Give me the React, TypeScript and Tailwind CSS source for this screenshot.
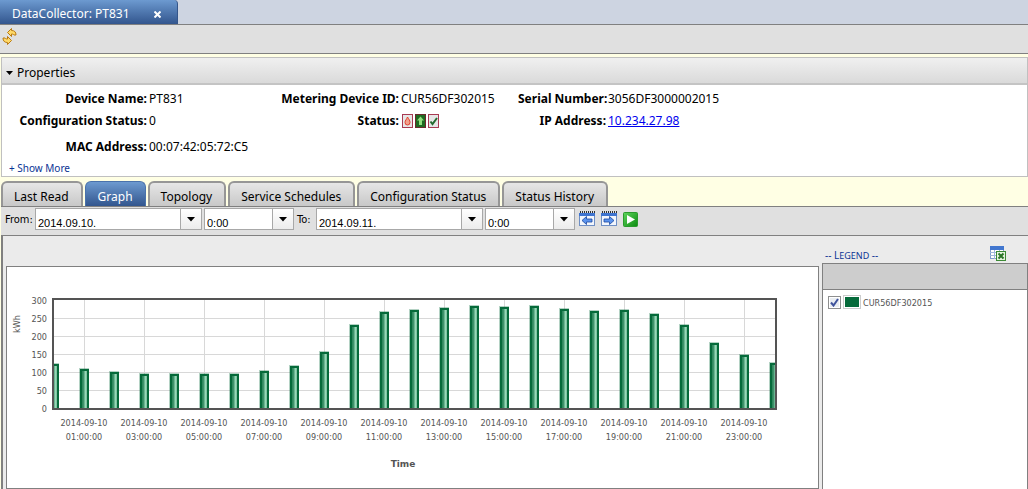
import { useState, type ReactNode } from 'react';

const tabs = ['Last Read', 'Graph', 'Topology', 'Service Schedules', 'Configuration Status', 'Status History'];

const readings = [
  124, 111, 101, 96, 95, 95, 96, 103, 118, 157, 231, 268, 275, 278, 285, 283, 285, 276, 272, 274, 263, 233, 181, 150, 126,
];

function Caret() {
  return (
    <svg width="8" height="5" viewBox="0 0 8 5" aria-hidden="true">
      <path d="M0 0h8L4 4.5z" fill="#000" />
    </svg>
  );
}

function RefreshIcon() {
  return (
    <svg width="16" height="18" viewBox="0 0 16 18" aria-hidden="true">
      <g fill="#ffd968" stroke="#b97a13" strokeWidth="1">
        <path d="M5.500 4.500 9.500.500v2c3 0 4.500 1.500 4.500 4.500h-2c-.500-.500-1-1-2.500-1v2.500z" />
        <path d="M9.500 12.500 5.500 16.500v-2c-3 0-4.500-1.500-4.500-4.500h2c.500.500 1 1 2.500 1V8.500z" />
      </g>
    </svg>
  );
}

function StatusIcons() {
  return (
    <span className="flex gap-0.5 pl-px">
      <svg width="11" height="14" viewBox="0 0 11 14" role="img" aria-label="Alarm">
        <rect x=".5" y=".5" width="10" height="13" fill="#e6e6e6" stroke="#a83a52" />
        <path d="M5.500 3C7 5.500 8 6.500 8 8.500a2.500 2.500 0 0 1-5 0C3 6.500 4.500 5.500 5.500 3z" fill="#f3a08c" stroke="#e0402c" />
      </svg>
      <svg width="11" height="14" viewBox="0 0 11 14" role="img" aria-label="Up">
        <rect x=".5" y=".5" width="10" height="13" fill="#1f6b22" stroke="#6b2a2c" />
        <path d="M5.500 2.500 9 6.500H7V11H4V6.500H2z" fill="#8fe07c" />
      </svg>
      <svg width="11" height="14" viewBox="0 0 11 14" role="img" aria-label="OK">
        <rect x=".5" y=".5" width="10" height="13" fill="#e6e6e6" stroke="#a83a52" />
        <path d="M2.500 7.500 4.500 10 9 4" fill="none" stroke="#23692f" strokeWidth="2" />
      </svg>
    </span>
  );
}

function CalendarIcon({ back = false }: { back?: boolean }) {
  return (
    <svg width="16" height="16" viewBox="0 0 16 16" aria-hidden="true">
      <rect x=".5" y="2.500" width="15" height="12" fill="#f2f6fd" stroke="#6f8fc4" />
      <path d="M0 2h16v3H0z" fill="#3f74cf" />
      <path d="M1 1h15" stroke="#333" strokeWidth="2" strokeDasharray="1 1" />
      <path
        d={back ? 'M3 9.500 7.500 5.500v2.500H13v3H7.500v2.500z' : 'M13 9.500 8.500 5.500v2.500H3v3h5.500v2.500z'}
        fill="#5b93ee"
        stroke="#1c479c"
        strokeWidth=".8"
      />
    </svg>
  );
}

function RunIcon() {
  return (
    <svg width="15" height="15" viewBox="0 0 15 15" aria-hidden="true">
      <defs>
        <linearGradient id="run" x1="0" y1="0" x2="1" y2="1">
          <stop offset="0" stopColor="#5fd45c" />
          <stop offset="1" stopColor="#0b8a10" />
        </linearGradient>
      </defs>
      <rect x=".5" y=".5" width="14" height="14" rx="1" fill="url(#run)" stroke="#2a9a2d" />
      <path d="M4 3 12 7.500 4 12z" fill="#fff" />
    </svg>
  );
}

function ExportIcon() {
  return (
    <svg width="17" height="16" viewBox="0 0 17 16" aria-hidden="true">
      <rect x=".5" y=".5" width="13" height="12" fill="#fff" stroke="#7f9ccc" />
      <path d="M0 0h14v4H0z" fill="#4277cf" />
      <path d="M0 6.500h14M0 9.500h14M4.500 4v9M9.500 4v9" stroke="#9fb6dc" />
      <rect x="6.500" y="5.500" width="9" height="9" fill="#e5f3df" stroke="#3c8a35" />
      <path d="M8.500 7.500l5 5M13.500 7.500l-5 5" stroke="#2a7427" strokeWidth="2" />
    </svg>
  );
}

function Field({ label, children }: { label: string; children?: ReactNode }) {
  return (
    <>
      <dt className="text-right font-bold whitespace-nowrap">{label}</dt>
      <dd className="flex items-center">{children}</dd>
    </>
  );
}

function DateField({ label, value }: { label: string; value: string }) {
  return (
    <div className="flex h-[22px] w-[167px] border border-[#a8a8a8] bg-white">
      <input
        aria-label={label}
        defaultValue={value}
        className="min-w-0 flex-1 bg-white px-0.5 pt-2 font-['Liberation_Sans',sans-serif] text-[11px] outline-none"
      />
      <button
        type="button"
        aria-label={`${label} calendar`}
        className="flex w-[21px] items-center justify-center border-l border-[#a8a8a8] bg-linear-to-b from-white to-[#ececec]"
      >
        <Caret />
      </button>
    </div>
  );
}

function HourField({ label }: { label: string }) {
  return (
    <div className="relative h-[22px] w-[90px] border border-[#a8a8a8] bg-white">
      <select
        aria-label={label}
        className="block h-full w-full appearance-none bg-white px-0.5 pt-2 font-['Liberation_Sans',sans-serif] text-[11px] leading-3 outline-none"
      >
        <option>0:00</option>
        <option>12:00</option>
      </select>
      <span className="pointer-events-none absolute inset-y-0 right-0 flex w-[21px] items-center justify-center border-l border-[#a8a8a8] bg-linear-to-b from-white to-[#ececec]">
        <Caret />
      </span>
    </div>
  );
}

function Chart() {
  const zero = 141.5;
  const left = 47;
  const y = (kwh: number) => zero - kwh * 0.36;
  const hours = Array.from({ length: 12 }, (_, i) => i * 2 + 1);

  return (
    <svg
      width="800"
      height="220"
      viewBox="0 0 800 220"
      className="block font-['DejaVu_Sans_Condensed','DejaVu_Sans',sans-serif] text-[9px]"
      role="img"
      aria-label="Consumption in kWh by hour"
    >
      <defs>
        <linearGradient id="bar">
          <stop offset="0" stopColor="#1b7a4c" />
          <stop offset=".35" stopColor="#3c9169" />
          <stop offset=".65" stopColor="#9ad8b9" />
          <stop offset="1" stopColor="#4fa87c" />
        </linearGradient>
        <clipPath id="plot">
          <rect x="47" y="32" width="721" height="110" />
        </clipPath>
      </defs>
      <g stroke="#d8d8d8">
        {[50, 100, 150, 200, 250].map((v) => (
          <path key={v} d={`M47 ${y(v)}h721`} />
        ))}
        {hours.map((h) => (
          <path key={h} d={`M${left + h * 30 + 0.5} 33v108`} />
        ))}
      </g>
      <g clipPath="url(#plot)">
        {readings.map((v, h) => (
          <g key={h}>
            <rect x={left + h * 30 - 5} y={Math.round(y(v)) - 1} width="10" height="120" fill="#056a3a" opacity=".3" />
            <rect
              x={left + h * 30 - 3}
              y={Math.round(y(v)) + 1}
              width="7"
              height="120"
              fill="url(#bar)"
              stroke="#056a3a"
              strokeWidth="2"
            />
          </g>
        ))}
      </g>
      <rect x="46" y="32" width="723" height="110" fill="none" stroke="#545454" strokeWidth="2" />
      <g fill="#545454">
        {[0, 50, 100, 150, 200, 250, 300].map((v) => (
          <text key={v} x="40" y={y(v) + 3.5} textAnchor="end">
            {v}
          </text>
        ))}
        <text transform="translate(13 57) rotate(-90)" textAnchor="middle">
          kWh
        </text>
        {hours.map((h) => (
          <text key={h} textAnchor="middle" y="159">
            <tspan x={left + h * 30}>2014-09-10</tspan>
            <tspan x={left + h * 30} dy="14">
              {String(h).padStart(2, '0')}:00:00
            </tspan>
          </text>
        ))}
        <text x="396" y="200" textAnchor="middle" className="font-['DejaVu_Sans',sans-serif] font-bold">
          Time
        </text>
      </g>
    </svg>
  );
}

export default function App() {
  const [active, setActive] = useState('Graph');

  return (
    <div className="flex min-h-screen flex-col bg-[#ffffe4] font-['Noto_Sans',sans-serif] text-xs text-black">
      <header className="flex h-[25px] border-b border-[#808080] bg-[#cdd4e1]">
        <div className="flex w-[178px] items-center justify-between rounded-tr border-r border-[#34558a] bg-linear-to-b from-[#6d9ad0] to-[#33568e] pr-[14px] pl-3 pt-1 text-white">
          <span>DataCollector: PT831</span>
          <button aria-label="Close tab" className="p-0.5">
            <svg width="7" height="7" viewBox="0 0 7 7" aria-hidden="true">
              <path d="M.5.500l6 6M6.500.500l-6 6" stroke="#fff" strokeWidth="2" />
            </svg>
          </button>
        </div>
      </header>

      <div className="flex h-[29px] border-b border-[#808080] bg-[#e0e0e0] px-0.5 pt-[3px]">
        <button aria-label="Refresh" className="h-[18px]">
          <RefreshIcon />
        </button>
      </div>

      <section className="mt-[3px] ml-px border border-[#c0c0c0] bg-white">
        <h2 className="flex h-[27px] items-center gap-1 border-b-2 border-[#c4c4c4] bg-linear-to-b from-[#f0f0f0] to-[#dadada] px-1 pt-1">
          <svg width="7" height="4" viewBox="0 0 7 4" aria-hidden="true">
            <path d="M0 0h7L3.500 4z" />
          </svg>
          Properties
        </h2>
        <dl className="grid grid-cols-[145px_118px_130px_115px_88px_1fr] grid-rows-[22px_22px_30px] gap-x-[2px] pt-[3px] leading-[22px]">
          <Field label="Device Name:">PT831</Field>
          <Field label="Metering Device ID:">CUR56DF302015</Field>
          <Field label="Serial Number:">3056DF3000002015</Field>
          <Field label="Configuration Status:">0</Field>
          <Field label="Status:">
            <StatusIcons />
          </Field>
          <Field label="IP Address:">
            <a href="#device" className="text-[#0000ee] underline">
              10.234.27.98
            </a>
          </Field>
          <dt className="self-center text-right font-bold">MAC Address:</dt>
          <dd className="self-center">00:07:42:05:72:C5</dd>
        </dl>
        <button className="block px-[7px] pb-0.5 text-[10px] leading-3 text-[#0b3494]">+ Show More</button>
      </section>

      <nav className="mt-1 ml-px flex h-[26px] gap-0.5 border-b border-[#808080]">
        {tabs.map((tab) => (
          <button
            key={tab}
            onClick={() => setActive(tab)}
            className={
              tab === active
                ? 'rounded-t-md border border-b-0 border-[#4a72ab] bg-linear-to-b from-[#6d9ad0] to-[#33568e] px-3 pt-[5px] text-white'
                : 'rounded-t-md border-2 border-b-0 border-[#969696] bg-linear-to-b from-[#e6e6e6] to-[#c8c8c8] pt-1 pr-3 pl-[11px]'
            }
          >
            {tab}
          </button>
        ))}
      </nav>

      <main className="ml-px flex flex-1 flex-col bg-[#e0e0e0]">
        <form className="flex h-[28px] items-center gap-0.5 pb-1 pl-1 text-[11px]">
          <span className="w-7 pt-0.5 font-['DejaVu_Sans_Condensed',sans-serif]">From:</span>
          <DateField label="From date" value="2014.09.10." />
          <HourField label="From hour" />
          <span className="w-[18px] pt-0.5 pl-px font-['DejaVu_Sans_Condensed',sans-serif]">To:</span>
          <DateField label="To date" value="2014.09.11." />
          <HourField label="To hour" />
          <div className="flex items-center gap-1.5 pl-0.5">
            <button type="button" aria-label="Previous day">
              <CalendarIcon back />
            </button>
            <button type="button" aria-label="Next day">
              <CalendarIcon />
            </button>
            <button type="button" aria-label="Run">
              <RunIcon />
            </button>
          </div>
        </form>

        <div className="flex flex-1 gap-[3px] border-t border-l-2 border-[#808080] bg-[#ebebeb] pl-[3px]">
          <section className="mt-[30px] min-w-0 flex-1 overflow-hidden border border-[#808080] bg-white">
            <Chart />
          </section>

          <aside className="flex w-[206px] flex-col">
            <div className="flex h-[27px] items-end justify-between pr-[21px] pl-[3px] text-[10px] text-[#0b3494]">
              <h3 className="leading-[14px]">
                -- L<span className="text-[9px]">EGEND</span> --
              </h3>
              <button aria-label="Export to Excel" className="h-[18px]">
                <ExportIcon />
              </button>
            </div>
            <div className="h-[27px] border border-[#808080] bg-[#cdcdcd]" />
            <div className="flex-1 border-x border-[#808080] bg-white">
              <label className="flex items-center gap-0.5 px-[5px] pt-[5px] text-[9px] text-[#545454]">
                <input type="checkbox" defaultChecked className="peer sr-only" />
                <span className="flex h-[13px] w-[13px] items-center justify-center border border-[#8e8f8f] bg-[#e9edf2] text-transparent outline-1 -outline-offset-2 outline-white peer-checked:text-[#3f539c]">
                  <svg width="9" height="9" viewBox="0 0 9 9" aria-hidden="true">
                    <path d="M1 4.500 3.500 7.500 8 1" fill="none" stroke="currentColor" strokeWidth="2" />
                  </svg>
                </span>
                <span className="h-[14px] w-[18px] border border-[#ccc] bg-[#056a3a] outline-1 -outline-offset-2 outline-white" />
                <span className="pt-0.5 font-['DejaVu_Sans_Condensed',sans-serif]">CUR56DF302015</span>
              </label>
            </div>
          </aside>
        </div>
      </main>
    </div>
  );
}
